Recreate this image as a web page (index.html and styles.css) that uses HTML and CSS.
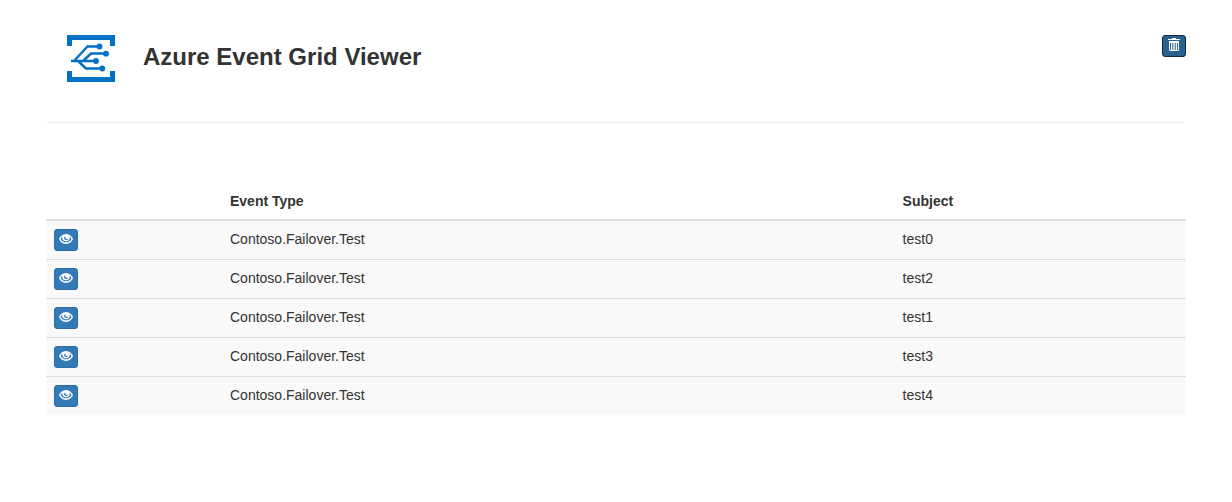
FILE: index.html
```
<!DOCTYPE html>
<html lang="en">
<head>
<meta charset="utf-8">
<title>Azure Event Grid Viewer</title>
<link rel="stylesheet" href="styles.css">
</head>
<body>
<svg class="symbols" aria-hidden="true">
  <symbol id="eye" viewBox="0 0 14 10">
    <path fill="#fff" fill-rule="evenodd" d="M7 0C10.500 0 12.800 2.300 14 5C12.800 7.800 10.500 10 7 10S1.200 7.800 0 5C1.200 2.300 3.500 0 7 0ZM3.400 2.300C2.500 3 2 3.900 1.600 4.900C2.800 7.200 4.600 8.300 7 8.300S11.200 7.200 12.400 4.900C12 3.900 11.500 3 10.600 2.300C11.400 5.200 9.800 7.300 7 7.300S2.600 5.200 3.400 2.300ZM5.200 3C4.700 4.700 5.600 6.200 7.400 6.100C8.600 6 9.200 5.200 9.100 4.200C8.600 5 7.800 5.200 7 4.800C6.300 4.400 6.100 3.600 6.500 2.600Z"/>
  </symbol>
</svg>
<main class="page">
  <header class="header">
    <svg class="logo" viewBox="0 0 48 47" aria-hidden="true">
      <path fill="#0072c6" d="M0 0H48V11H43V5H5V11H0ZM0 36H5V42H43V36H48V47H0Z"/>
      <g fill="none" stroke="#0072c6" stroke-width="2.400">
        <path d="M4 26H29M7 26L20.500 11.500H32M16 26L24 18.500H39M11 26L19 33.500H35"/>
      </g>
      <g fill="#0072c6">
        <circle cx="32.500" cy="11.500" r="2.900"/>
        <circle cx="39" cy="18.700" r="2.900"/>
        <circle cx="29" cy="26" r="2.900"/>
        <circle cx="35.300" cy="33.500" r="2.900"/>
      </g>
    </svg>
    <h1 class="title">Azure Event Grid Viewer</h1>
    <button class="btn btn-clear" type="button" aria-label="Clear events">
      <svg class="trash" viewBox="0 0 12 14" aria-hidden="true">
        <path fill="#fff" fill-rule="evenodd" d="M4 0H8V1H12V2H0V1H4ZM1 3H11V12L10 13H2L1 12ZM2 5V12H3V5ZM4.300 5V12H5.300V5ZM6.700 5V12H7.700V5ZM9 5V12H10V5Z"/>
      </svg>
    </button>
  </header>
  <table class="events">
    <thead>
      <tr><th class="col-view"></th><th class="col-type" scope="col">Event Type</th><th scope="col">Subject</th></tr>
    </thead>
    <tbody>
      <tr><td><button class="btn" type="button" aria-label="View test0"><svg class="eye"><use href="#eye"/></svg></button></td><td>Contoso.Failover.Test</td><td>test0</td></tr>
      <tr><td><button class="btn" type="button" aria-label="View test2"><svg class="eye"><use href="#eye"/></svg></button></td><td>Contoso.Failover.Test</td><td>test2</td></tr>
      <tr><td><button class="btn" type="button" aria-label="View test1"><svg class="eye"><use href="#eye"/></svg></button></td><td>Contoso.Failover.Test</td><td>test1</td></tr>
      <tr><td><button class="btn" type="button" aria-label="View test3"><svg class="eye"><use href="#eye"/></svg></button></td><td>Contoso.Failover.Test</td><td>test3</td></tr>
      <tr><td><button class="btn" type="button" aria-label="View test4"><svg class="eye"><use href="#eye"/></svg></button></td><td>Contoso.Failover.Test</td><td>test4</td></tr>
    </tbody>
  </table>
</main>
</body>
</html>
```
FILE: styles.css
```
* { box-sizing: border-box; }
body {
  margin: 0;
  background: #fff;
  color: #333;
  font: 14px/20px "Liberation Sans", Arial, sans-serif;
}
.symbols { display: none; }
.page { padding: 35px 46px; }
.header {
  display: flex;
  align-items: flex-start;
  padding: 0 0 40px 21px;
  border-bottom: 1px solid #eee;
}
.logo { width: 48px; height: 47px; }
.title {
  margin: 8px auto 0 28px;
  font-size: 24px;
  line-height: 28px;
}
.btn {
  display: flex;
  align-items: center;
  justify-content: center;
  width: 24px;
  height: 22px;
  padding: 0 0 2px;
  background: #337ab7;
  border: 1px solid #2e6da4;
  border-radius: 3px;
}
.btn-clear {
  background: #286090;
  border-color: #122b40;
}
.eye { width: 14px; height: 10px; }
.trash { width: 12px; height: 14px; }
.events {
  width: 100%;
  margin-top: 60px;
  table-layout: fixed;
  border-collapse: separate;
  border-spacing: 0;
}
.events th {
  padding: 8px;
  text-align: left;
  border-bottom: 2px solid #ddd;
}
.col-view { width: 176px; }
.col-type { width: 59%; }
.events td {
  padding: 8px;
  vertical-align: top;
  background: #f9f9f9;
  border-top: 1px solid #ddd;
}
.events tr:first-child td { border-top: 0; }
```
